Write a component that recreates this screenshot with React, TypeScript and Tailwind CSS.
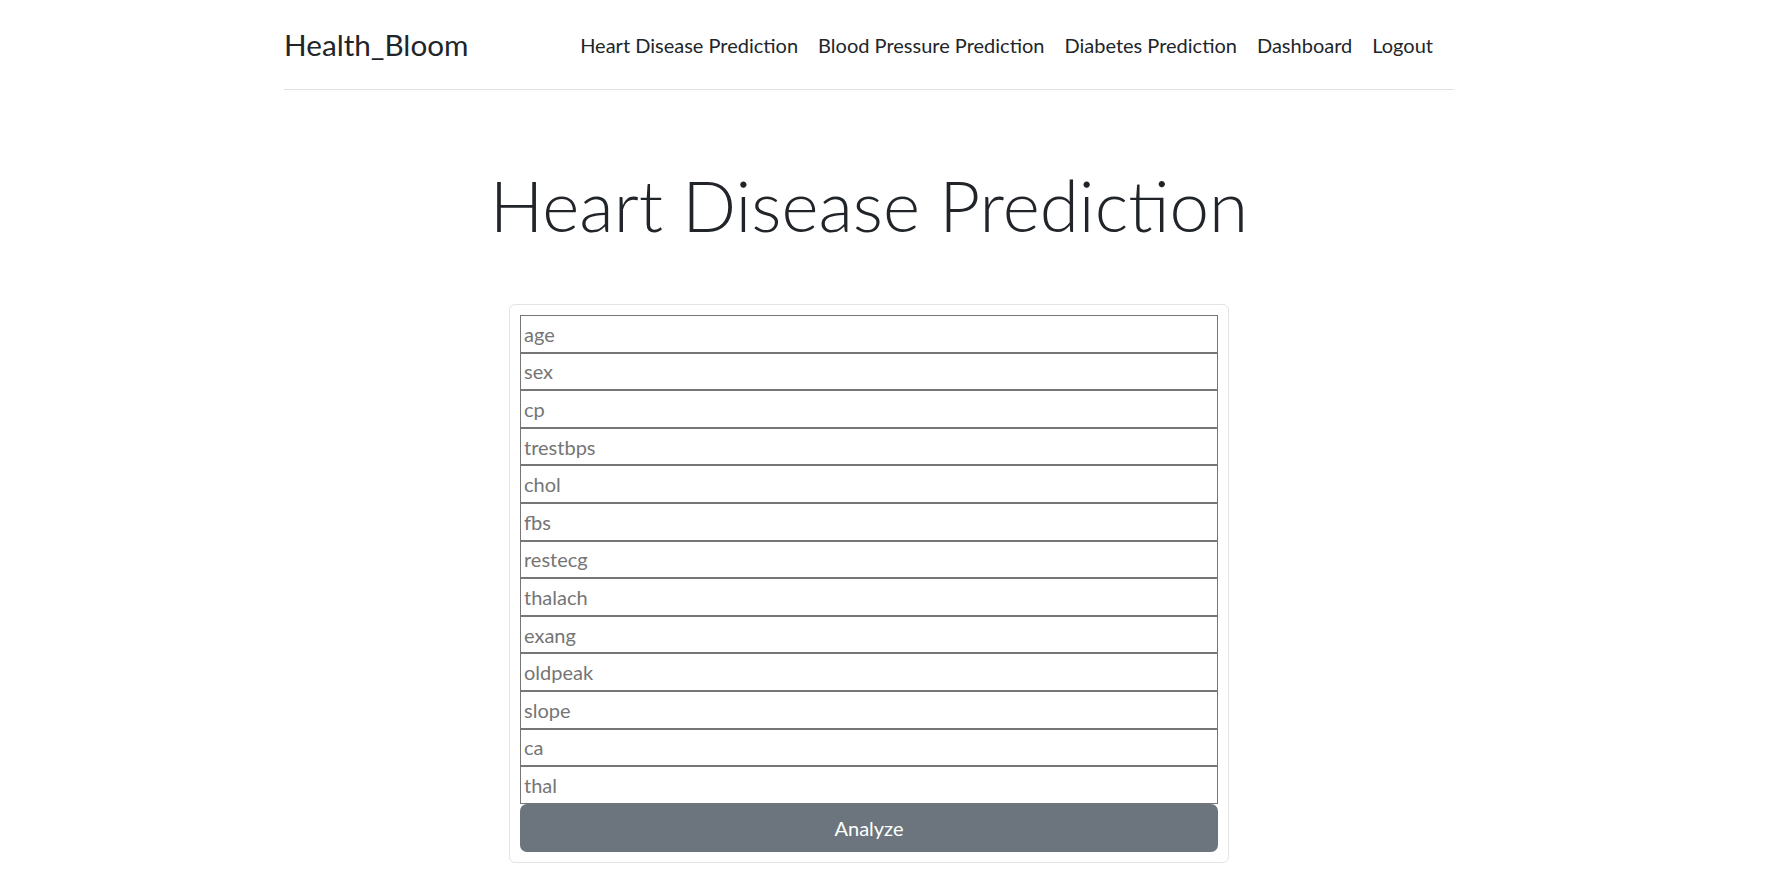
const fields = [
  'age',
  'sex',
  'cp',
  'trestbps',
  'chol',
  'fbs',
  'restecg',
  'thalach',
  'exang',
  'oldpeak',
  'slope',
  'ca',
  'thal',
]

const links = [
  'Heart Disease Prediction',
  'Blood Pressure Prediction',
  'Diabetes Prediction',
  'Dashboard',
  'Logout',
]

export default function App() {
  return (
    <div className="min-h-screen bg-white pr-[50px] text-[#212529] font-['Lato',sans-serif]">
      <div className="mx-auto w-[1170px]">
        {/* Navbar */}
        <header className="flex h-[90px] items-center justify-between border-b border-[#dee2e6]">
          <a href="#" className="text-[29.7px] leading-none">
            Health_Bloom
          </a>
          <nav className="flex items-center pr-[21px]">
            {links.map((l) => (
              <a key={l} href="#" className="px-[10px] text-[20px] leading-none last:pr-0">
                {l}
              </a>
            ))}
          </nav>
        </header>

        <h1 className="mt-[79px] text-center text-[71px] font-light leading-none">
          Heart Disease Prediction
        </h1>

        <form
          onSubmit={(e) => e.preventDefault()}
          className="mx-auto mt-[64px] w-[720px] rounded-[6px] border border-[#e3e3e3] p-[10px]"
        >
          {fields.map((f) => (
            <input
              key={f}
              type="text"
              name={f}
              placeholder={f}
              className="block h-[37.6px] w-full border border-[#767676] px-[3px] text-[20px] outline-none placeholder:text-[#757575]"
            />
          ))}
          <button
            type="submit"
            className="block h-[48px] w-full rounded-[7px] bg-[#6c757d] text-[20px] text-white"
          >
            Analyze
          </button>
        </form>
      </div>
    </div>
  )
}
